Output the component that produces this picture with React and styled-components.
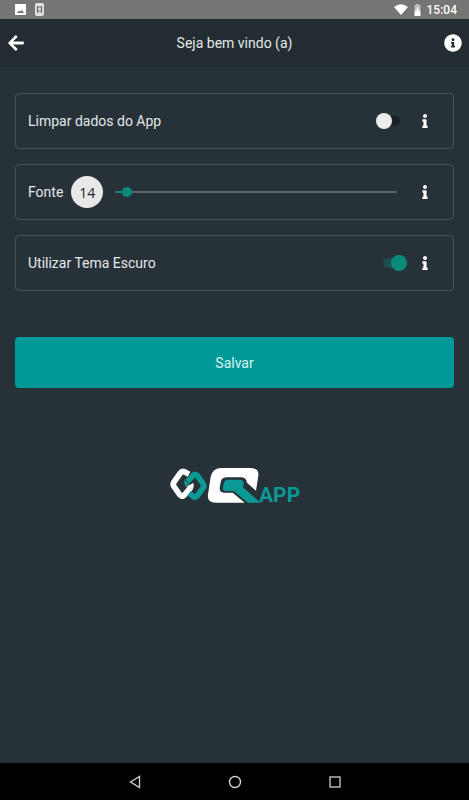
import React, { useState } from 'react';
import styled, { createGlobalStyle } from 'styled-components';
import { FaArrowLeft, FaInfo, FaInfoCircle } from 'react-icons/fa';

const GlobalStyle = createGlobalStyle`
  * {
    box-sizing: border-box;
  }
  body {
    margin: 0;
    background: #263238;
    font-family: Roboto, sans-serif;
  }
`;

const Screen = styled.div`
  min-height: 100vh;
  display: flex;
  flex-direction: column;
  color: #e4e8ea;
  font-size: 14px;
`;

const StatusBar = styled.div`
  height: 19px;
  padding: 0 12px 0 15px;
  display: flex;
  align-items: center;
  justify-content: space-between;
  background: #757575;
  color: #fff;
`;

const StatusGroup = styled.div`
  display: flex;
  align-items: center;
  gap: ${(props) => props.$gap}px;
`;

const Clock = styled.span`
  font-size: 12px;
  font-weight: 500;
`;

const Header = styled.header`
  height: 48px;
  padding: 0 7px;
  display: flex;
  align-items: center;
  justify-content: space-between;
  background: #232d31;
  border-bottom: 1px solid #212b30;
`;

const Title = styled.h1`
  margin: 0;
  font-size: 14px;
  font-weight: 400;
`;

const IconButton = styled.button`
  width: ${(props) => props.$width}px;
  height: 36px;
  padding: 0;
  flex: none;
  display: flex;
  align-items: center;
  justify-content: center;
  border: 0;
  background: none;
  color: #fff;
  font-size: ${(props) => props.$size}px;
`;

const Content = styled.main`
  flex: 1;
  padding: 26px 15px;
  display: flex;
  flex-direction: column;
`;

const Cards = styled.div`
  display: flex;
  flex-direction: column;
  gap: 15px;
`;

const Card = styled.div`
  height: 56px;
  padding: 0 10px 0 12px;
  display: flex;
  align-items: center;
  border: 1px solid #465257;
  border-radius: 4px;
`;

const Label = styled.label`
  flex: ${(props) => (props.$grow ? 1 : 'none')};
`;

const Switch = styled.input`
  appearance: none;
  position: relative;
  width: 31px;
  height: 16px;
  margin: 0;

  &::before {
    content: '';
    position: absolute;
    top: 3px;
    left: 7px;
    width: 17px;
    height: 10px;
    border-radius: 5px;
    background: #192125;
  }

  &::after {
    content: '';
    position: absolute;
    top: 0;
    left: 0;
    width: 16px;
    height: 16px;
    border-radius: 50%;
    background: #ececec;
  }

  &:checked::before {
    background: #1f4c4e;
  }

  &:checked::after {
    left: 15px;
    background: #0a8a7b;
  }
`;

const FontSize = styled.output`
  width: 32px;
  height: 32px;
  margin: 0 12px 0 8px;
  flex: none;
  display: flex;
  align-items: center;
  justify-content: center;
  border-radius: 50%;
  background: #e8e8e8;
  color: #222;
  font-family: 'Open Sans', Roboto, sans-serif;
`;

const Slider = styled.input`
  appearance: none;
  flex: 1;
  min-width: 0;
  height: 20px;
  margin: 0 10px 0 0;
  background:
    linear-gradient(#0a8a7b, #0a8a7b) left center / ${(props) => props.$filled}% 2px no-repeat,
    linear-gradient(#58656a, #58656a) center / 100% 2px no-repeat;

  &::-webkit-slider-thumb {
    appearance: none;
    width: 10px;
    height: 10px;
    border-radius: 50%;
    background: #0a8a7b;
  }
`;

const SaveButton = styled.button`
  height: 51px;
  margin-top: 46px;
  border: 0;
  border-radius: 4px;
  background: #009997;
  color: #d9f3f2;
  font-family: inherit;
  font-size: 14px;
`;

const Logo = styled.svg`
  width: 130px;
  height: 36px;
  margin: 80px auto 0;
  overflow: visible;
`;

const NavBar = styled.nav`
  height: 37px;
  display: flex;
  align-items: center;
  justify-content: center;
  gap: 64px;
  background: #000;
`;

const QAppLogo = () => (
  <Logo viewBox="33 39 390 108" role="img" aria-label="QApp">
    <path
      d="M90 58 L76 50 Q69 47 64 54 L45 81 Q40 88 45 95 L62 119 Q68 127 75 121 L95 98"
      fill="none" stroke="#fff" strokeWidth="17" strokeLinejoin="round"
    />
    <path
      d="M85 80 L103 61 Q109 55 115 62 L132 86 Q137 93 132 99 L116 121 Q110 129 102 124 L90 115"
      fill="none" stroke="#0a9995" strokeWidth="17" strokeLinejoin="round"
    />
    <path d="M77 75 L91 86 L80 94 Q73 84 77 75 Z" fill="#0a9995" />
    <path d="M78 97 L103 84 Q107 94 101 104 L89 94 Z" fill="#fff" />
    <path
      d="M188 39 H272 Q301 39 298 62 L291 107 L264 83 Q262 67 245 67 H204 Q187 67 185 82 L182 99 Q181 113 195 113 H221 L257 143 H170 Q143 143 147 118 L155 66 Q160 39 188 39 Z"
      fill="#fff"
    />
    <path
      d="M207 74 H242 Q255 74 254 88 L252 97 L304 143 H267 L224 108 H201 Q190 108 192 96 L194 86 Q196 74 207 74 Z"
      fill="#0a9995"
    />
    <text x="300" y="141" fill="#0a9995" fontFamily="Roboto, sans-serif" fontWeight="700" fontSize="63">
      APP
    </text>
  </Logo>
);

const InfoButton = ({ label }) => (
  <IconButton type="button" $width={36} $size={14} aria-label={label}>
    <FaInfo />
  </IconButton>
);

const MIN_FONT = 12;
const MAX_FONT = 100;

const App = () => {
  const [clearData, setClearData] = useState(false);
  const [darkTheme, setDarkTheme] = useState(true);
  const [fontSize, setFontSize] = useState(14);

  return (
    <Screen>
      <GlobalStyle />
      <StatusBar>
        <StatusGroup $gap={9}>
          <svg width="11" height="11" viewBox="0 0 11 11">
            <rect width="11" height="11" rx="1" fill="#fff" />
            <path d="M2 9 L4 6.500 L5 7.500 L7 6 L9 9 Z" fill="#757575" />
          </svg>
          <svg width="9" height="13" viewBox="0 0 9 13">
            <rect width="9" height="13" rx="2" fill="#e0e0e0" />
            <path d="M2.500 10 V3 M6.500 10 V3 M2.500 4 H6.500 M2.500 8 H6.500" fill="none" stroke="#6b6b6b" strokeWidth="1.200" />
          </svg>
        </StatusGroup>
        <StatusGroup $gap={6}>
          <svg width="14" height="11" viewBox="0 0 14 11">
            <path d="M0 3 Q7 -2.500 14 3 L7 11 Z" fill="#fff" />
          </svg>
          <svg width="7" height="12" viewBox="0 0 7 12">
            <path d="M2 0 H5 V1 H6.500 V7 H0.500 V1 H2 Z" fill="#bdbdbd" />
            <path d="M0.500 7 H6.500 V12 H0.500 Z" fill="#fff" />
            <path d="M4 2 L2 6.500 H3.300 V9.500 L5.200 5.300 H4 Z" fill="#fff" />
          </svg>
          <Clock>15:04</Clock>
        </StatusGroup>
      </StatusBar>

      <Header>
        <IconButton type="button" $width={18} $size={18} aria-label="Voltar">
          <FaArrowLeft />
        </IconButton>
        <Title>Seja bem vindo (a)</Title>
        <IconButton type="button" $width={18} $size={18} aria-label="Ajuda">
          <FaInfoCircle />
        </IconButton>
      </Header>

      <Content>
        <Cards>
          <Card>
            <Label htmlFor="clear" $grow>Limpar dados do App</Label>
            <Switch
              id="clear"
              type="checkbox"
              checked={clearData}
              onChange={(e) => setClearData(e.target.checked)}
            />
            <InfoButton label="Sobre limpar dados" />
          </Card>
          <Card>
            <Label htmlFor="font">Fonte</Label>
            <FontSize htmlFor="font">{fontSize}</FontSize>
            <Slider
              id="font"
              type="range"
              min={MIN_FONT}
              max={MAX_FONT}
              value={fontSize}
              $filled={((fontSize - MIN_FONT) / (MAX_FONT - MIN_FONT)) * 100}
              onChange={(e) => setFontSize(Number(e.target.value))}
            />
            <InfoButton label="Sobre a fonte" />
          </Card>
          <Card>
            <Label htmlFor="dark" $grow>Utilizar Tema Escuro</Label>
            <Switch
              id="dark"
              type="checkbox"
              checked={darkTheme}
              onChange={(e) => setDarkTheme(e.target.checked)}
            />
            <InfoButton label="Sobre o tema escuro" />
          </Card>
        </Cards>
        <SaveButton type="button">Salvar</SaveButton>
        <QAppLogo />
      </Content>

      <NavBar>
        <IconButton type="button" $width={36} $size={14} aria-label="Back">
          <svg width="12" height="14" viewBox="0 0 12 14">
            <path d="M10.500 1.500 V12.500 L1.500 7 Z" fill="none" stroke="#d0d0d0" strokeWidth="1.300" />
          </svg>
        </IconButton>
        <IconButton type="button" $width={36} $size={14} aria-label="Home">
          <svg width="14" height="14" viewBox="0 0 14 14">
            <circle cx="7" cy="7" r="5.500" fill="none" stroke="#d0d0d0" strokeWidth="1.400" />
          </svg>
        </IconButton>
        <IconButton type="button" $width={36} $size={14} aria-label="Recents">
          <svg width="12" height="12" viewBox="0 0 12 12">
            <rect x="1" y="1" width="10" height="10" fill="none" stroke="#d0d0d0" strokeWidth="1.300" />
          </svg>
        </IconButton>
      </NavBar>
    </Screen>
  );
};

export default App;
